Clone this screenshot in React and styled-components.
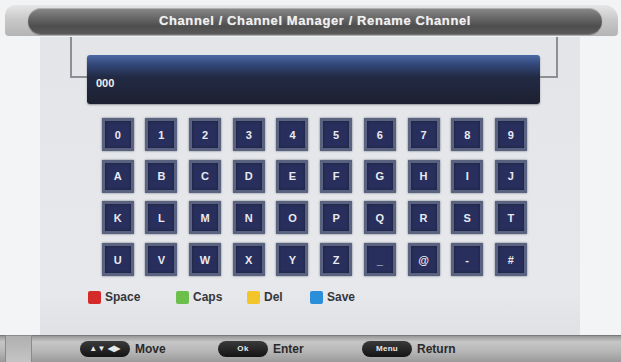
import React from "react";
import styled, { createGlobalStyle } from "styled-components";

const Global = createGlobalStyle`
  html, body { margin: 0; padding: 0; background: #eef0f2; }
  body { font-family: "Liberation Sans", Arial, sans-serif; }
`;

const Screen = styled.div`
  width: 621px;
  height: 362px;
  display: flex;
  flex-direction: column;
  overflow: hidden;
  background: #f2f3f5;
`;

const Header = styled.div`
  height: 37px;
  padding: 5px 3px 0 5px;
  box-sizing: border-box;
  background: #f2f3f5;
`;

const HeaderBand = styled.div`
  height: 31px;
  border-radius: 10px 14px 4px 4px;
  background: linear-gradient(180deg, #e6e6e6 0%, #c9c9c9 45%, #b4b4b4 100%);
  display: flex;
  align-items: center;
  padding: 0 16px 0 23px;
`;

const TitlePill = styled.div`
  flex: 1;
  height: 26px;
  border-radius: 13px;
  background: linear-gradient(180deg, #8a8a8a 0%, #6a6a6a 35%, #4e4e4e 70%, #5a5a5a 100%);
  box-shadow: inset 0 1px 0 rgba(255,255,255,0.35), 0 1px 1px rgba(0,0,0,0.4);
  display: flex;
  align-items: center;
  justify-content: center;
  color: #f0f0f0;
  font-size: 13px;
  font-weight: bold;
  letter-spacing: 0.6px;
  text-shadow: 0 0 1px rgba(255,255,255,0.5);
`;

const Main = styled.div`
  flex: 1;
  display: flex;
`;

const Side = styled.div`
  width: ${(p) => p.$w}px;
  background: #f3f4f6;
`;

const Panel = styled.div`
  flex: 1;
  background: linear-gradient(180deg, #e3e5e8 0%, #e6e8eb 85%, #dfe1e4 100%);
  display: flex;
  flex-direction: column;
  padding: 0 22px 0 30px;
`;

const InputRow = styled.div`
  display: flex;
  align-items: flex-start;
`;

const Bracket = styled.div`
  width: ${(p) => p.$w}px;
  height: 41px;
  box-sizing: border-box;
  border-bottom: 2px solid #8c8f94;
  ${(p) => (p.$side === "left" ? "border-left: 2px solid #8c8f94;" : "border-right: 2px solid #8c8f94;")}
`;

const InputBox = styled.div`
  flex: 1;
  margin-top: 18px;
  height: 49px;
  border-radius: 3px;
  background: linear-gradient(180deg, #4d6aa6 0%, #34497c 18%, #222a44 45%, #1c2030 100%);
  box-shadow: 0 1px 2px rgba(0,0,0,0.35);
  display: flex;
  align-items: center;
  padding: 6px 0 0 9px;
  box-sizing: border-box;
  color: #f0f0f0;
  font-size: 11px;
  font-weight: bold;
`;

const Keys = styled.div`
  margin: 14px 0 0 31.7px;
  display: grid;
  grid-template-columns: repeat(10, 32px);
  grid-auto-rows: 33px;
  column-gap: 11.7px;
  row-gap: 8.7px;
`;

const Key = styled.div`
  box-sizing: border-box;
  border: 3px solid #59627f;
  background: #292f5c;
  box-shadow: 0 0 2px rgba(40,45,70,0.6), inset 0 0 3px rgba(0,0,0,0.4);
  display: flex;
  align-items: center;
  justify-content: center;
  color: #e8eaf2;
  font-size: 11px;
  font-weight: bold;
`;

const Legend = styled.div`
  margin: 14px 0 0 18px;
  display: grid;
  grid-template-columns: 88px 71px 63px auto;
  align-items: center;
`;

const LegendItem = styled.div`
  display: flex;
  align-items: center;
  gap: 4px;
  color: #34363b;
  font-size: 12px;
  font-weight: bold;
`;

const Swatch = styled.span`
  width: 13px;
  height: 13px;
  border-radius: 2px;
  background: ${(p) => p.$c};
`;

const Footer = styled.div`
  height: 27px;
  background: linear-gradient(180deg, #8e8e8e 0%, #c6c6c6 25%, #b7b7b7 60%, #9a9a9a 100%);
  display: grid;
  grid-template-columns: 80px 138px 144px auto;
  align-items: center;
  box-shadow: inset 0 1px 0 #7a7a7a;
`;

const FootCell = styled.div`
  height: 100%;
  padding-left: 5px;
  box-sizing: border-box;
  display: flex;
`;

const FootBox = styled.div`
  width: 27px;
  height: 100%;
  box-sizing: border-box;
  border: 1px solid #8a8a8a;
  border-bottom: none;
  background: linear-gradient(180deg, #b0b0b0, #c4c4c4);
`;

const Hint = styled.div`
  display: flex;
  align-items: center;
  gap: 5px;
  color: #2a2a2a;
  font-size: 12px;
  font-weight: bold;
`;

const Pill = styled.span`
  width: 50px;
  height: 16px;
  border-radius: 8px;
  background: linear-gradient(180deg, #3a3a3a, #141414);
  color: #e8e8e8;
  font-size: 8px;
  font-weight: bold;
  display: flex;
  align-items: center;
  justify-content: center;
  letter-spacing: 0.3px;
`;

const rows = [
  ["0", "1", "2", "3", "4", "5", "6", "7", "8", "9"],
  ["A", "B", "C", "D", "E", "F", "G", "H", "I", "J"],
  ["K", "L", "M", "N", "O", "P", "Q", "R", "S", "T"],
  ["U", "V", "W", "X", "Y", "Z", "_", "@", "-", "#"],
];

const legend = [
  ["#d42a2a", "Space"],
  ["#6cbf4a", "Caps"],
  ["#f2c52a", "Del"],
  ["#2a8fd8", "Save"],
];

export default function App() {
  return (
    <>
      <Global />
      <Screen>
        <Header>
          <HeaderBand>
            <TitlePill>Channel / Channel Manager / Rename Channel</TitlePill>
          </HeaderBand>
        </Header>
        <Main>
          <Side $w={40} />
          <Panel>
            <InputRow>
              <Bracket $side="left" $w={17} />
              <InputBox>000</InputBox>
              <Bracket $side="right" $w={18} />
            </InputRow>
            <Keys>
              {rows.flat().map((k, i) => (
                <Key key={i}>{k}</Key>
              ))}
            </Keys>
            <Legend>
              {legend.map(([c, t]) => (
                <LegendItem key={t}>
                  <Swatch $c={c} />
                  {t}
                </LegendItem>
              ))}
            </Legend>
          </Panel>
          <Side $w={41} />
        </Main>
        <Footer>
          <FootCell>
            <FootBox />
          </FootCell>
          <Hint>
            <Pill>▲▼ ◀▶</Pill>Move
          </Hint>
          <Hint>
            <Pill>Ok</Pill>Enter
          </Hint>
          <Hint>
            <Pill>Menu</Pill>Return
          </Hint>
        </Footer>
      </Screen>
    </>
  );
}
